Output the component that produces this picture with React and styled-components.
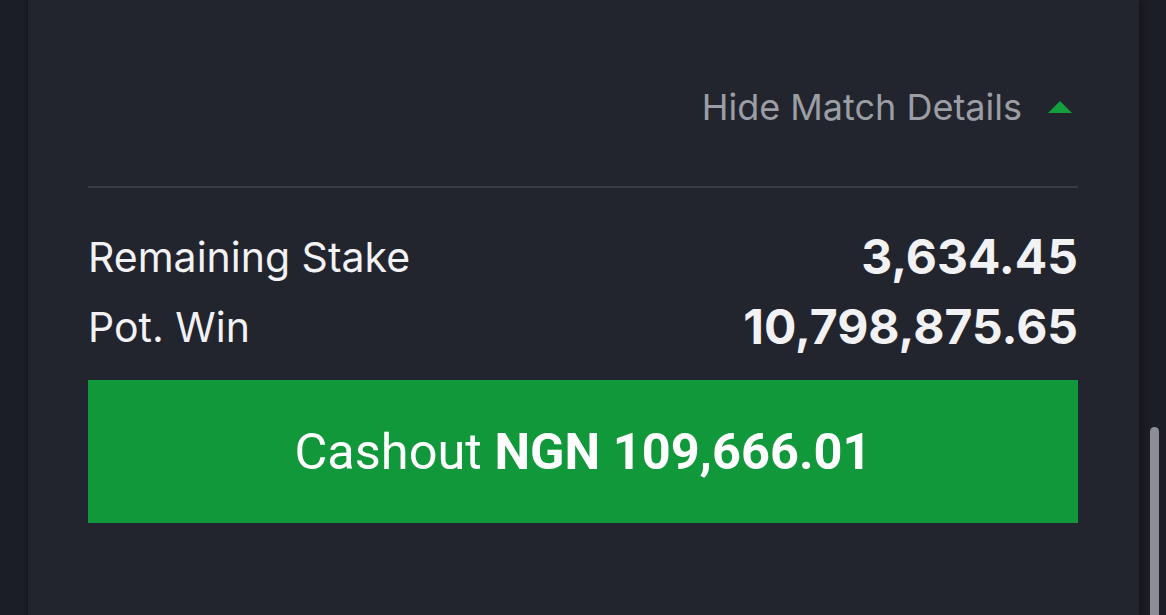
import React from 'react';
import styled, { createGlobalStyle } from 'styled-components';

const GlobalStyle = createGlobalStyle`
  html, body {
    margin: 0;
    padding: 0;
    background: #1c1e25;
    overflow: hidden;
  }
  #root {
    min-height: 100vh;
  }
`;

const Page = styled.div`
  position: relative;
  height: 615px;
  background: #1c1e25;
  display: flex;
`;

const Card = styled.div`
  margin-left: 27px;
  width: 1112px;
  background: #23252e;
  border-left: 1px solid #17181e;
  box-shadow: 4px 0 6px rgba(0, 0, 0, 0.25);
  padding: 0 61px 0 60px;
  box-sizing: border-box;
  display: flex;
  flex-direction: column;
`;

const Header = styled.div`
  display: flex;
  justify-content: flex-end;
  align-items: center;
  height: 40px;
  margin-top: 87px;
  padding-right: 6px;
  gap: 26px;
`;

const Toggle = styled.span`
  font-family: Inter, "Noto Sans", sans-serif;
  font-size: 36px;
  line-height: 1;
  color: #9c9ea6;
`;

const Caret = styled.span`
  width: 0;
  height: 0;
  border-left: 12px solid transparent;
  border-right: 12px solid transparent;
  border-bottom: 12px solid #13a03c;
`;

const Divider = styled.div`
  height: 2px;
  background: #383a42;
  margin-top: 59px;
`;

const Rows = styled.div`
  display: flex;
  flex-direction: column;
  margin-top: 48px;
  gap: 28px;
`;

const Row = styled.div`
  display: flex;
  justify-content: space-between;
  align-items: center;
  height: 42px;
`;

const Label = styled.span`
  font-family: Inter, "Noto Sans", sans-serif;
  font-size: 41px;
  line-height: 1;
  color: #f2f2f5;
`;

const Value = styled.span`
  font-family: Inter, "Noto Sans", sans-serif;
  font-size: 48px;
  font-weight: 700;
  line-height: 1;
  color: #f2f2f5;
`;

const CashoutButton = styled.button`
  margin-top: 32px;
  height: 143px;
  border: none;
  border-radius: 0;
  background: #10983a;
  color: #ffffff;
  font-family: Roboto, "Liberation Sans", sans-serif;
  font-size: 50.5px;
  display: flex;
  align-items: center;
  justify-content: center;
  gap: 0.25em;
  cursor: pointer;
`;

const Strong = styled.strong`
  font-weight: 700;
`;

const ScrollThumb = styled.div`
  position: absolute;
  left: 1150px;
  top: 427px;
  width: 9px;
  height: 200px;
  border-radius: 5px;
  background: #8d8e95;
`;

const rows = [
  { label: 'Remaining Stake', value: '3,634.45' },
  { label: 'Pot. Win', value: '10,798,875.65' },
];

export default function App() {
  return (
    <>
      <GlobalStyle />
      <Page>
        <Card>
          <Header>
            <Toggle>Hide Match Details</Toggle>
            <Caret />
          </Header>
          <Divider />
          <Rows>
            {rows.map((r) => (
              <Row key={r.label}>
                <Label>{r.label}</Label>
                <Value>{r.value}</Value>
              </Row>
            ))}
          </Rows>
          <CashoutButton>
            <span>Cashout</span>
            <Strong>NGN 109,666.01</Strong>
          </CashoutButton>
        </Card>
        <ScrollThumb />
      </Page>
    </>
  );
}
